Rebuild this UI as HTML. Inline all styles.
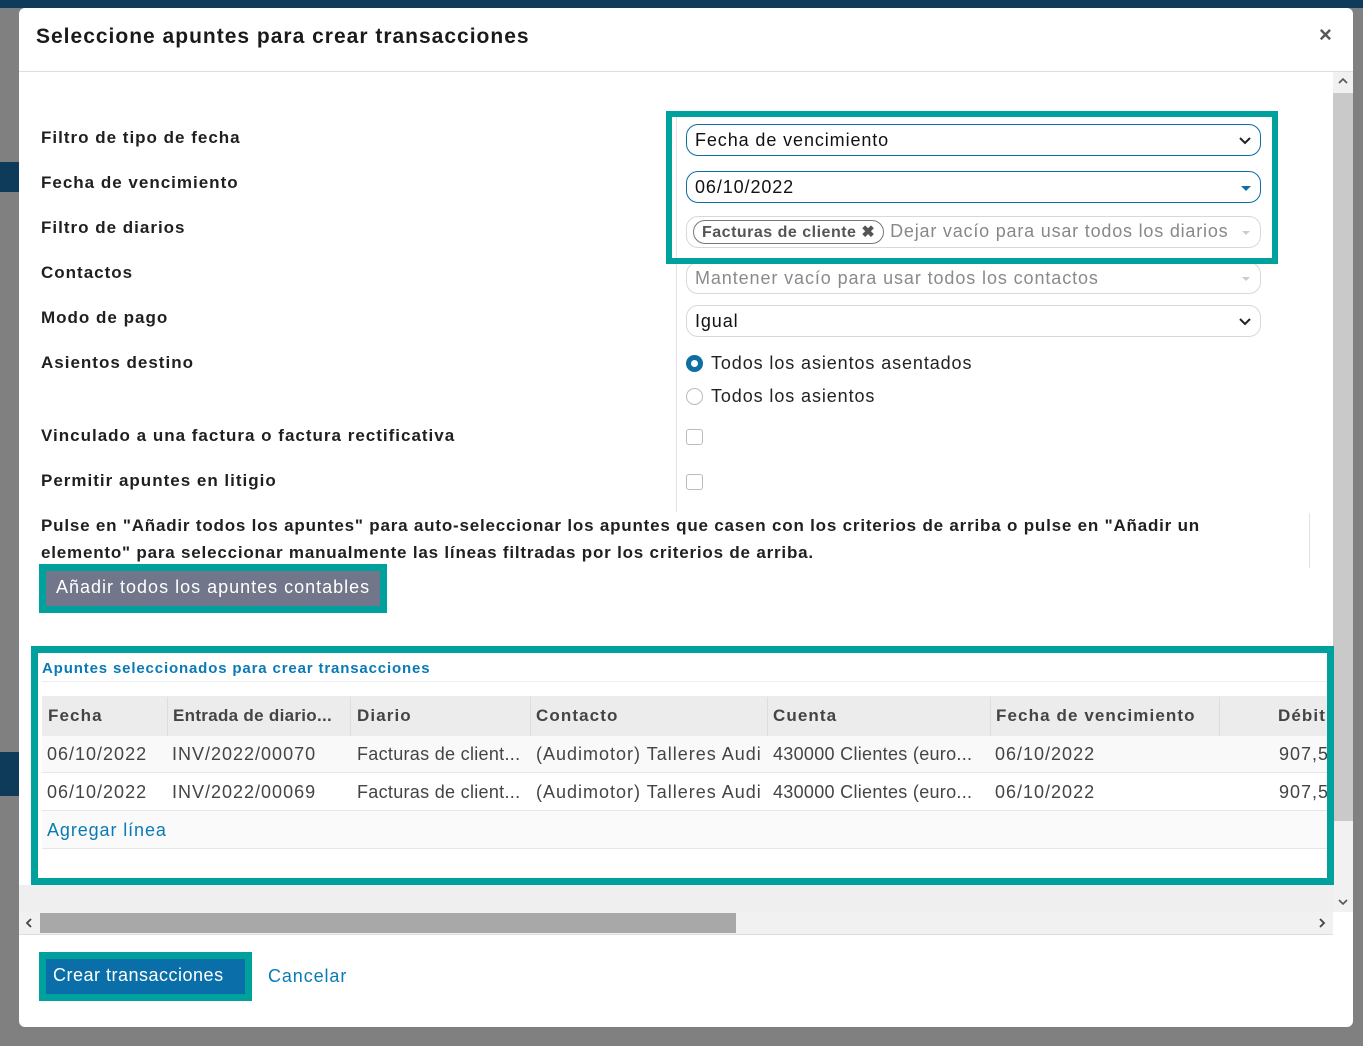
<!DOCTYPE html>
<html><head><meta charset="utf-8"><style>
*{box-sizing:border-box;margin:0;padding:0}
body{width:1363px;height:1046px;overflow:hidden;background:#808080;font-family:"Liberation Sans",sans-serif;position:relative;color:#222;letter-spacing:0.9px}
.a{position:absolute;white-space:nowrap}
.lbl{font-weight:bold;font-size:17px;color:#1f1f1f;letter-spacing:1px}
.inp{position:absolute;left:686px;width:575px;height:32px;border:1px solid #0b6fa5;border-radius:12px;font-size:18px;padding:5px 8px;color:#111}
.inp.g{border-color:#d8d8d8;color:#8a8a8a}
.chev{position:absolute;right:8px;top:6px}
.th{font-weight:bold;color:#444;font-size:17px;letter-spacing:1.1px}
.cell{font-size:18px;color:#444;letter-spacing:1px}
.clip{width:48px;overflow:hidden}
</style></head><body>
<div class="a" style="left:0;top:0;width:1363px;height:8px;background:#0e3b5a"></div>
<div class="a" style="left:0;top:162px;width:19px;height:30px;background:#0e3b5a"></div>
<div class="a" style="left:0;top:752px;width:19px;height:44px;background:#0e3b5a"></div>

<div class="a" style="left:19px;top:8px;width:1334px;height:1019px;background:#fff;border-radius:6px;overflow:hidden">
 <div class="a" style="left:17px;top:17px;font-size:21px;font-weight:bold;color:#1a1a1a;letter-spacing:1px">Seleccione apuntes para crear transacciones</div>
 <div class="a" style="left:1300px;top:14px;font-size:22px;font-weight:bold;color:#555">×</div>
 <div class="a" style="left:0;top:63px;width:1334px;height:1px;background:#dedede"></div>
 <div class="a" style="left:1314px;top:64px;width:20px;height:840px;background:#f1f1f1"></div>
 <div class="a" style="left:1314px;top:85px;width:20px;height:728px;background:#c9c9c9"></div>
 <svg class="a" style="left:1318px;top:68px" width="12" height="10" viewBox="0 0 12 10"><path d="M2 7l4-4 4 4" fill="none" stroke="#555" stroke-width="1.6"/></svg>
 <svg class="a" style="left:1318px;top:889px" width="12" height="10" viewBox="0 0 12 10"><path d="M2 3l4 4 4-4" fill="none" stroke="#555" stroke-width="1.6"/></svg>
</div>

<div class="a lbl" style="left:41px;top:128px">Filtro de tipo de fecha</div>
<div class="a lbl" style="left:41px;top:173px">Fecha de vencimiento</div>
<div class="a lbl" style="left:41px;top:218px">Filtro de diarios</div>
<div class="a lbl" style="left:41px;top:263px">Contactos</div>
<div class="a lbl" style="left:41px;top:308px">Modo de pago</div>
<div class="a lbl" style="left:41px;top:353px">Asientos destino</div>
<div class="a lbl" style="left:41px;top:426px">Vinculado a una factura o factura rectificativa</div>
<div class="a lbl" style="left:41px;top:471px">Permitir apuntes en litigio</div>
<div class="a" style="left:676px;top:112px;width:1px;height:400px;background:#e2e2e2"></div>

<div class="inp" style="top:124px">Fecha de vencimiento<svg class="chev" width="14" height="18" viewBox="0 0 14 18"><path d="M2 7l5 5 5-5" fill="none" stroke="#222" stroke-width="2"/></svg></div>
<div class="inp" style="top:171px">06/10/2022<svg class="chev" width="12" height="18" viewBox="0 0 12 18"><path d="M1 8h10l-5 5z" fill="#0b6fa5"/></svg></div>
<div class="inp g" style="top:216px;padding:3px 6px;color:#888;letter-spacing:0.8px"><span style="display:inline-block;border:1px solid #777;border-radius:12px;padding:1px 8px;font-weight:bold;font-size:16px;color:#555;letter-spacing:0.5px">Facturas de cliente ✖</span> Dejar vacío para usar todos los diarios<svg class="chev" width="12" height="18" viewBox="0 0 12 18"><path d="M2 8h8l-4 4z" fill="#ccc"/></svg></div>
<div class="inp g" style="top:262px">Mantener vacío para usar todos los contactos<svg class="chev" width="12" height="18" viewBox="0 0 12 18"><path d="M2 8h8l-4 4z" fill="#ccc"/></svg></div>
<div class="inp g" style="top:305px;color:#111">Igual<svg class="chev" width="14" height="18" viewBox="0 0 14 18"><path d="M2 7l5 5 5-5" fill="none" stroke="#222" stroke-width="2"/></svg></div>

<div class="a" style="left:686px;top:355px;width:17px;height:17px;border-radius:50%;border:5px solid #0b6fa5;background:#fff"></div>
<div class="a" style="left:711px;top:353px;font-size:18px;color:#222">Todos los asientos asentados</div>
<div class="a" style="left:686px;top:388px;width:17px;height:17px;border-radius:50%;border:1px solid #bbb"></div>
<div class="a" style="left:711px;top:386px;font-size:18px;color:#222">Todos los asientos</div>
<div class="a" style="left:686px;top:429px;width:17px;height:16px;border-radius:3px;border:1px solid #bbb"></div>
<div class="a" style="left:686px;top:474px;width:17px;height:16px;border-radius:3px;border:1px solid #bbb"></div>

<div class="a" style="left:666px;top:111px;width:612px;height:153px;border:6px solid #00a19c"></div>

<div class="a lbl" style="left:41px;top:516px;letter-spacing:0.8px">Pulse en "Añadir todos los apuntes" para auto-seleccionar los apuntes que casen con los criterios de arriba o pulse en "Añadir un</div>
<div class="a lbl" style="left:41px;top:543px;letter-spacing:0.8px">elemento" para seleccionar manualmente las líneas filtradas por los criterios de arriba.</div>
<div class="a" style="left:1309px;top:513px;width:1px;height:55px;background:#e2e2e2"></div>

<div class="a" style="left:39px;top:564px;width:348px;height:49px;background:#00a19c"></div>
<div class="a" style="left:46px;top:571px;width:334px;height:35px;background:#71768a;color:#fff;font-size:18px;padding:6px 10px;letter-spacing:1px">Añadir todos los apuntes contables</div>

<div class="a" style="left:19px;top:885px;width:1314px;height:27px;background:#efefef"></div>
<div class="a" style="left:19px;top:912px;width:1314px;height:22px;background:#f1f1f1"></div>
<div class="a" style="left:40px;top:913px;width:696px;height:20px;background:#a8a8a8"></div>
<svg class="a" style="left:24px;top:917px" width="10" height="12" viewBox="0 0 10 12"><path d="M7 2l-4 4 4 4" fill="none" stroke="#444" stroke-width="1.8"/></svg>
<svg class="a" style="left:1317px;top:917px" width="10" height="12" viewBox="0 0 10 12"><path d="M3 2l4 4-4 4" fill="none" stroke="#444" stroke-width="1.8"/></svg>
<div class="a" style="left:19px;top:934px;width:1314px;height:1px;background:#ddd"></div>

<div class="a" style="left:42px;top:660px;font-size:15px;font-weight:bold;color:#0a7ab5;letter-spacing:0.85px">Apuntes seleccionados para crear transacciones</div>
<div class="a" style="left:42px;top:681px;width:1285px;height:1px;background:#eee"></div>
<div class="a" style="left:42px;top:696px;width:1285px;height:40px;background:#ececec"></div>
<div class="a" style="left:42px;top:736px;width:1285px;height:37px;background:#f9f9f9;border-bottom:1px solid #e6e6e6"></div>
<div class="a" style="left:42px;top:773px;width:1285px;height:38px;background:#fff;border-bottom:1px solid #e6e6e6"></div>
<div class="a" style="left:42px;top:811px;width:1285px;height:38px;background:#fafafa;border-bottom:1px solid #e6e6e6"></div>
<div class="a" style="left:167px;top:697px;width:1px;height:39px;background:#ddd"></div>
<div class="a" style="left:350px;top:697px;width:1px;height:39px;background:#ddd"></div>
<div class="a" style="left:530px;top:697px;width:1px;height:39px;background:#ddd"></div>
<div class="a" style="left:767px;top:697px;width:1px;height:39px;background:#ddd"></div>
<div class="a" style="left:990px;top:697px;width:1px;height:39px;background:#ddd"></div>
<div class="a" style="left:1219px;top:697px;width:1px;height:39px;background:#ddd"></div>

<div class="a th" style="left:48px;top:706px">Fecha</div>
<div class="a th" style="left:173px;top:706px;letter-spacing:0.3px">Entrada de diario...</div>
<div class="a th" style="left:357px;top:706px">Diario</div>
<div class="a th" style="left:536px;top:706px">Contacto</div>
<div class="a th" style="left:773px;top:706px">Cuenta</div>
<div class="a th" style="left:996px;top:706px">Fecha de vencimiento</div>
<div class="a th clip" style="left:1278px;top:706px">Débito</div>

<div class="a cell" style="left:47px;top:744px">06/10/2022</div>
<div class="a cell" style="left:172px;top:744px">INV/2022/00070</div>
<div class="a cell" style="left:357px;top:744px;letter-spacing:0.3px">Facturas de client...</div>
<div class="a cell" style="left:536px;top:744px">(Audimotor) Talleres Audi</div>
<div class="a cell" style="left:773px;top:744px;letter-spacing:0.3px">430000 Clientes (euro...</div>
<div class="a cell" style="left:995px;top:744px">06/10/2022</div>
<div class="a cell clip" style="left:1279px;top:744px">907,50</div>
<div class="a cell" style="left:47px;top:782px">06/10/2022</div>
<div class="a cell" style="left:172px;top:782px">INV/2022/00069</div>
<div class="a cell" style="left:357px;top:782px;letter-spacing:0.3px">Facturas de client...</div>
<div class="a cell" style="left:536px;top:782px">(Audimotor) Talleres Audi</div>
<div class="a cell" style="left:773px;top:782px;letter-spacing:0.3px">430000 Clientes (euro...</div>
<div class="a cell" style="left:995px;top:782px">06/10/2022</div>
<div class="a cell clip" style="left:1279px;top:782px">907,50</div>
<div class="a" style="left:47px;top:820px;font-size:18px;color:#0a7ab5">Agregar línea</div>

<div class="a" style="left:31px;top:646px;width:1303px;height:239px;border:7px solid #00a19c"></div>

<div class="a" style="left:39px;top:952px;width:213px;height:49px;background:#00a19c"></div>
<div class="a" style="left:46px;top:959px;width:199px;height:35px;background:#0a6fa8;color:#fff;font-size:18px;padding:6px 7px;letter-spacing:0.5px">Crear transacciones</div>
<div class="a" style="left:268px;top:966px;font-size:18px;color:#0a7ab5">Cancelar</div>
</body></html>
